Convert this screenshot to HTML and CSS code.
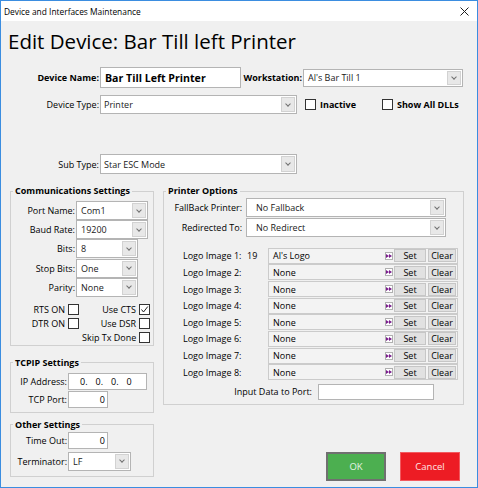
FILE: index.html
```html
<!DOCTYPE html>
<html lang="en">
<head>
  <meta charset="UTF-8" />
  <title>Device and Interfaces Maintenance</title>
  <link rel="stylesheet" href="styles.css">
</head>
<body>
<div class="window">

  <div class="titlebar">
    <span>Device and Interfaces Maintenance</span>
    <svg class="close" width="9" height="9" viewBox="0 0 9 9"><path d="M0.5 0.5 L8.5 8.5 M8.5 0.5 L0.5 8.5" stroke="#1e1e1e" stroke-width="1"/></svg>
  </div>

  <div class="content">
    <h1>Edit Device: Bar Till left Printer</h1>

    <div class="row row-name">
      <span class="lbl-main bold">Device Name:</span>
      <div class="textbox name">Bar Till Left Printer</div>
      <span class="lbl-ws bold">Workstation:</span>
      <div class="select ws"><span class="value">Al's Bar Till 1</span><span class="arrow"></span></div>
    </div>

    <div class="row row-type">
      <span class="lbl-main">Device Type:</span>
      <div class="select type"><span class="value">Printer</span><span class="arrow"></span></div>
      <span class="check check-inactive"><span class="cb"></span><span class="bold">Inactive</span></span>
      <span class="check"><span class="cb"></span><span class="bold">Show All DLLs</span></span>
    </div>

    <div class="row row-sub">
      <span class="lbl-main">Sub Type:</span>
      <div class="select type sub"><span class="value">Star ESC Mode</span><span class="arrow"></span></div>
    </div>

    <div class="columns">
      <div class="left">

        <fieldset class="comm">
          <legend>Communications Settings</legend>
          <div class="fields">
            <div class="field"><span class="lbl">Port Name:</span><div class="select wide"><span class="value">Com1</span><span class="arrow"></span></div></div>
            <div class="field"><span class="lbl">Baud Rate:</span><div class="select wide"><span class="value">19200</span><span class="arrow"></span></div></div>
            <div class="field"><span class="lbl">Bits:</span><div class="select narrow"><span class="value">8</span><span class="arrow"></span></div></div>
            <div class="field"><span class="lbl">Stop Bits:</span><div class="select narrow"><span class="value">One</span><span class="arrow"></span></div></div>
            <div class="field"><span class="lbl">Parity:</span><div class="select narrow"><span class="value">None</span><span class="arrow"></span></div></div>
          </div>
          <div class="checks">
            <span class="clbl">RTS ON</span><span class="cb"></span>
            <span class="clbl">Use CTS</span>
            <span class="cb checked"><svg width="9" height="9" viewBox="0 0 9 9"><path d="M1.5 4.5 L3.5 7 L7.8 1.5" fill="none" stroke="#222" stroke-width="1"/></svg></span>
            <span class="clbl">DTR ON</span><span class="cb"></span>
            <span class="clbl">Use DSR</span><span class="cb"></span>
            <span></span><span></span>
            <span class="clbl">Skip Tx Done</span><span class="cb"></span>
          </div>
        </fieldset>

        <fieldset class="tcpip">
          <legend>TCPIP Settings</legend>
          <div class="field small"><span class="lbl short">IP Address:</span>
            <div class="textbox ip"><span>0.</span><span>0.</span><span>0.</span><span>0</span></div>
          </div>
          <div class="field small gap1"><span class="lbl short">TCP Port:</span><div class="textbox num">0</div></div>
        </fieldset>

        <fieldset class="other">
          <legend>Other Settings</legend>
          <div class="field small"><span class="lbl short">Time Out:</span><div class="textbox num">0</div></div>
          <div class="field gap3"><span class="lbl short">Terminator:</span><div class="select term"><span class="value">LF</span><span class="arrow"></span></div></div>
        </fieldset>

      </div>

      <div class="right">
        <fieldset class="printer">
          <legend>Printer Options</legend>
          <div class="field first"><span class="lbl plbl">FallBack Printer:</span><div class="select pselect"><span class="value">No Fallback</span><span class="arrow"></span></div></div>
          <div class="field gap1"><span class="lbl plbl">Redirected To:</span><div class="select pselect"><span class="value">No Redirect</span><span class="arrow"></span></div></div>

          <div class="logos">
            <div class="logo"><span class="logo-lbl">Logo Image 1:</span><span class="logo-num">19</span>
              <div class="logo-box"><span class="logo-name">Al's Logo</span><span class="ff"><svg width="6" height="4" viewBox="0 0 6 4"><path d="M0 0 L3 2 L0 4 Z M3 0 L6 2 L3 4 Z" fill="#7a1c8c"/></svg></span><span class="mini set">Set</span><span class="mini clear">Clear</span></div></div>
            <div class="logo"><span class="logo-lbl">Logo Image 2:</span><span class="logo-num"></span>
              <div class="logo-box"><span class="logo-name">None</span><span class="ff"><svg width="6" height="4" viewBox="0 0 6 4"><path d="M0 0 L3 2 L0 4 Z M3 0 L6 2 L3 4 Z" fill="#7a1c8c"/></svg></span><span class="mini set">Set</span><span class="mini clear">Clear</span></div></div>
            <div class="logo"><span class="logo-lbl">Logo Image 3:</span><span class="logo-num"></span>
              <div class="logo-box"><span class="logo-name">None</span><span class="ff"><svg width="6" height="4" viewBox="0 0 6 4"><path d="M0 0 L3 2 L0 4 Z M3 0 L6 2 L3 4 Z" fill="#7a1c8c"/></svg></span><span class="mini set">Set</span><span class="mini clear">Clear</span></div></div>
            <div class="logo"><span class="logo-lbl">Logo Image 4:</span><span class="logo-num"></span>
              <div class="logo-box"><span class="logo-name">None</span><span class="ff"><svg width="6" height="4" viewBox="0 0 6 4"><path d="M0 0 L3 2 L0 4 Z M3 0 L6 2 L3 4 Z" fill="#7a1c8c"/></svg></span><span class="mini set">Set</span><span class="mini clear">Clear</span></div></div>
            <div class="logo"><span class="logo-lbl">Logo Image 5:</span><span class="logo-num"></span>
              <div class="logo-box"><span class="logo-name">None</span><span class="ff"><svg width="6" height="4" viewBox="0 0 6 4"><path d="M0 0 L3 2 L0 4 Z M3 0 L6 2 L3 4 Z" fill="#7a1c8c"/></svg></span><span class="mini set">Set</span><span class="mini clear">Clear</span></div></div>
            <div class="logo"><span class="logo-lbl">Logo Image 6:</span><span class="logo-num"></span>
              <div class="logo-box"><span class="logo-name">None</span><span class="ff"><svg width="6" height="4" viewBox="0 0 6 4"><path d="M0 0 L3 2 L0 4 Z M3 0 L6 2 L3 4 Z" fill="#7a1c8c"/></svg></span><span class="mini set">Set</span><span class="mini clear">Clear</span></div></div>
            <div class="logo"><span class="logo-lbl">Logo Image 7:</span><span class="logo-num"></span>
              <div class="logo-box"><span class="logo-name">None</span><span class="ff"><svg width="6" height="4" viewBox="0 0 6 4"><path d="M0 0 L3 2 L0 4 Z M3 0 L6 2 L3 4 Z" fill="#7a1c8c"/></svg></span><span class="mini set">Set</span><span class="mini clear">Clear</span></div></div>
            <div class="logo"><span class="logo-lbl">Logo Image 8:</span><span class="logo-num"></span>
              <div class="logo-box"><span class="logo-name">None</span><span class="ff"><svg width="6" height="4" viewBox="0 0 6 4"><path d="M0 0 L3 2 L0 4 Z M3 0 L6 2 L3 4 Z" fill="#7a1c8c"/></svg></span><span class="mini set">Set</span><span class="mini clear">Clear</span></div></div>
          </div>

          <div class="field input-row"><span class="lbl dlbl">Input Data to Port:</span><div class="textbox data"></div></div>
        </fieldset>

        <div class="actions">
          <button class="btn ok">OK</button>
          <button class="btn cancel">Cancel</button>
        </div>
      </div>
    </div>
  </div>

</div>
</body>
</html>
```

FILE: styles.css
```css
* {
  box-sizing: border-box;
}

body {
  margin: 0;
  font-family: "Open Sans", "Noto Sans", sans-serif;
  font-size: 9px;
  color: #000;
}

.bold {
  font-weight: bold;
}

.window {
  width: 478px;
  height: 488px;
  border: 1px solid #3b8de0;
  background: #f0f0f0;
  overflow: hidden;
}

.titlebar {
  height: 20px;
  background: #fff;
  display: flex;
  align-items: center;
  justify-content: space-between;
  padding: 0 8px 0 3px;
  font-size: 8.4px;
}

.content {
  padding: 0 7px;
}

h1 {
  margin: 7px 0 0;
  font-size: 20.5px;
  font-weight: normal;
  line-height: 26px;
}

/* top rows */
.row {
  display: flex;
  align-items: center;
}

.row-name {
  margin-top: 13px;
  height: 21px;
}

.row-type {
  margin-top: 7px;
  height: 19px;
}

.row-sub {
  margin-top: 40px;
  height: 20px;
}

.lbl-main {
  width: 92px;
  text-align: right;
  padding-right: 1px;
}

.lbl-ws {
  width: 62px;
  text-align: right;
  padding-right: 1px;
}

.textbox {
  background: #fff;
  border: 1px solid #b4b4b4;
  display: flex;
  align-items: center;
}

.name {
  width: 141px;
  height: 21px;
  padding-left: 4px;
  font-size: 10.6px;
  font-weight: bold;
}

.select {
  background: #fff;
  border: 1px solid #b4b4b4;
  display: flex;
  align-items: stretch;
  height: 19px;
}

.select .value {
  flex: 1;
  padding-left: 4px;
  display: flex;
  align-items: center;
  white-space: nowrap;
  color: #1a1a1a;
}

.select .arrow {
  width: 14px;
  margin: 1px;
  background: #e8e8e8;
  border: 1px solid #d2d2d2;
  display: flex;
  align-items: center;
  justify-content: center;
}

.select .arrow::after {
  content: "";
  width: 3px;
  height: 3px;
  margin-top: -2px;
  border-right: 1px solid #707070;
  border-bottom: 1px solid #707070;
  transform: rotate(45deg);
}

.ws {
  width: 160px;
  height: 18px;
}

.type {
  width: 197px;
  height: 19px;
}

.type .value {
  padding-left: 3px;
}

.sub {
  height: 20px;
}

.check {
  display: flex;
  align-items: center;
  gap: 4px;
}

.check-inactive {
  margin-left: 8px;
  width: 77px;
}

.cb {
  width: 11px;
  height: 11px;
  background: #fff;
  border: 1px solid #333;
  display: flex;
  align-items: center;
  justify-content: center;
}

/* group boxes */
.columns {
  display: flex;
  margin-top: 11px;
}

.left {
  margin-left: 2px;
  width: 144px;
}

.right {
  margin-left: 9px;
  width: 301px;
}

fieldset {
  margin: 0;
  padding: 0;
  min-width: 0;
  border: 1px solid #d0d0d0;
}

legend {
  margin-left: 2px;
  padding: 0 2px;
  font-weight: bold;
  line-height: 12px;
}

.field {
  display: flex;
  align-items: center;
}

.lbl {
  text-align: right;
  padding-right: 1px;
  white-space: nowrap;
}

.comm .fields {
  padding-top: 4px;
  display: grid;
  row-gap: 0.2px;
}

.comm .lbl {
  width: 65px;
}

.wide {
  width: 72px;
}

.narrow {
  width: 62px;
}

.checks {
  margin-top: 7px;
  padding-bottom: 2px;
  display: grid;
  grid-template-columns: 54px 11px 54px 11px;
  grid-auto-rows: 11px;
  column-gap: 3px;
  row-gap: 3px;
  align-items: center;
}

.clbl {
  text-align: right;
  white-space: nowrap;
  line-height: 11px;
}

.tcpip {
  margin-top: 11px;
  padding: 4px 0 4px;
}

.other {
  margin-top: 6px;
  padding: 1px 0 5px;
}

.lbl.short {
  width: 57px;
}

.small .textbox {
  height: 17px;
}

.gap1 {
  margin-top: 1px;
}

.gap3 {
  margin-top: 3px;
}

.ip {
  width: 79px;
  padding-left: 11px;
}

.ip span {
  display: inline-block;
  width: 15.5px;
}

.num {
  width: 40px;
  justify-content: flex-end;
  padding-right: 2px;
}

.term {
  width: 63px;
}

/* printer options */
.printer {
  padding: 0 0 4px;
}

.first {
  margin-top: 1px;
}

.plbl {
  width: 78px;
  padding-right: 0;
  margin-right: 4px;
}

.pselect {
  width: 200px;
}

.pselect .value {
  padding-left: 9px;
}

.logos {
  margin-top: 10.7px;
  display: grid;
  grid-auto-rows: 16px;
  row-gap: 0.67px;
}

.logo {
  display: flex;
  align-items: center;
  padding-left: 19px;
}

.logo-lbl {
  width: 64px;
  white-space: nowrap;
}

.logo-num {
  width: 21px;
}

.logo-box {
  width: 190px;
  height: 16px;
  border: 1px solid #cbcbcb;
  background: #f3f3f3;
  display: flex;
  align-items: center;
  padding-right: 1px;
}

.logo-name {
  flex: 1;
  padding-left: 4px;
}

.ff {
  width: 8px;
  height: 8px;
  background: #fff;
  border: 1px solid #b0b0b0;
  display: flex;
  align-items: center;
  justify-content: center;
  margin-right: 1px;
}

.mini {
  height: 13px;
  background: #e1e1e1;
  border: 1px solid #c6c6c6;
  display: flex;
  align-items: center;
  justify-content: center;
}

.set {
  width: 32px;
  margin-right: 2px;
}

.clear {
  width: 28px;
}

.input-row {
  margin-top: 3.6px;
}

.dlbl {
  width: 149px;
  margin-right: 5px;
}

.data {
  width: 116px;
  height: 16px;
}

/* buttons */
.actions {
  margin-top: 47px;
  padding-right: 4px;
  display: flex;
  justify-content: flex-end;
  gap: 14px;
}

.btn {
  width: 60px;
  height: 29px;
  font-family: "Open Sans", "Noto Sans", sans-serif;
  font-size: 9.5px;
  padding: 0;
}

.ok {
  background: #4caf50;
  border: 2px solid #707070;
  color: #e4f4e4;
}

.cancel {
  background: #ed1c24;
  border: 1px solid #f25a5f;
  color: #ffe4e4;
}
```
